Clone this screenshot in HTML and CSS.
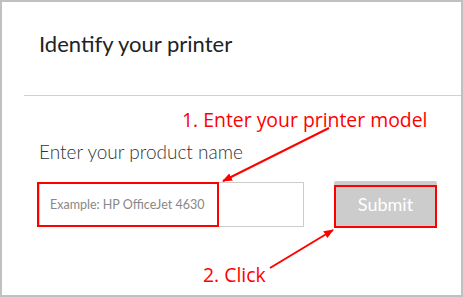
FILE: index.html
```html
<!DOCTYPE html>
<html lang="en">
<head>
  <meta charset="UTF-8" />
  <title>Identify your printer</title>
  <link rel="stylesheet" href="styles.css">
</head>
<body>
  <div class="frame">
    <header class="title">
      <h1>Identify your printer</h1>
    </header>
    <hr class="rule" />

    <div class="finder">
      <label class="label" for="product">Enter your product name</label>
      <div class="row">
        <input type="text" id="product" class="field" placeholder="Example: HP OfficeJet 4630" />
        <button class="submit">Submit</button>
      </div>
    </div>

    <!-- annotations drawn over the screenshot -->
    <div class="note note-1">1. Enter your printer model</div>
    <div class="note note-2">2. Click</div>
    <div class="mark mark-field"></div>
    <div class="mark mark-button"></div>
    <svg class="arrows" width="463" height="297" viewBox="0 0 463 297">
      <defs>
        <marker id="head" markerWidth="10" markerHeight="8" refX="9" refY="4" orient="auto" markerUnits="userSpaceOnUse">
          <path d="M0,0 L10,4 L0,8 Z" fill="#f00" />
        </marker>
      </defs>
      <line x1="329" y1="128" x2="223" y2="181" stroke="#f00" stroke-width="2" marker-end="url(#head)" />
      <line x1="270" y1="268" x2="333" y2="230" stroke="#f00" stroke-width="2" marker-end="url(#head)" />
    </svg>
  </div>
</body>
</html>
```

FILE: styles.css
```css
body {
  margin: 0;
  font-family: 'Lato', 'Open Sans', sans-serif;
  background: #fff;
}
.frame {
  position: relative;
  width: 463px;
  height: 297px;
  box-sizing: border-box;
  border: 2px solid #c0c0c0;
  background: #fff;
  overflow: hidden;
}
.title {
  padding: 27px 0 0 37px;
  height: 67px;
  box-sizing: border-box;
}
h1 {
  margin: 0;
  font-size: 22px;
  font-weight: 400;
  line-height: 30px;
  color: #222;
}
.rule {
  margin: 26px 0 0 22px;
  border: none;
  border-top: 1px solid #d0d0d0;
  height: 0;
}
.finder {
  padding: 44px 0 0 37px;
}
.label {
  display: block;
  font-size: 19px;
  font-weight: 300;
  line-height: 24px;
  color: #333;
}
.row {
  display: flex;
  align-items: flex-start;
  gap: 30px;
  margin-top: 18px;
}
.field {
  width: 265px;
  height: 45px;
  box-sizing: border-box;
  border: 1px solid #ccc;
  padding: 0 10px;
  font-family: inherit;
  font-size: 12.5px;
  color: #333;
  outline: none;
}
.field::placeholder {
  color: #888;
}
.submit {
  width: 103px;
  height: 45px;
  margin-top: -1px;
  border: none;
  border-radius: 2px;
  background: #ccc;
  color: #fff;
  font-family: inherit;
  font-size: 18px;
}
.note {
  position: absolute;
  font-family: 'Open Sans', sans-serif;
  font-size: 19.4px;
  line-height: 22px;
  color: #f00;
  white-space: nowrap;
}
.note-1 {
  left: 180px;
  top: 107px;
}
.note-2 {
  left: 201px;
  top: 262px;
}
.mark {
  position: absolute;
  border: 2px solid #f00;
  box-sizing: border-box;
}
.mark-field {
  left: 35px;
  top: 180px;
  width: 182px;
  height: 45px;
}
.mark-button {
  left: 332px;
  top: 183px;
  width: 103px;
  height: 43px;
}
.arrows {
  position: absolute;
  left: -2px;
  top: -2px;
  pointer-events: none;
}
```
